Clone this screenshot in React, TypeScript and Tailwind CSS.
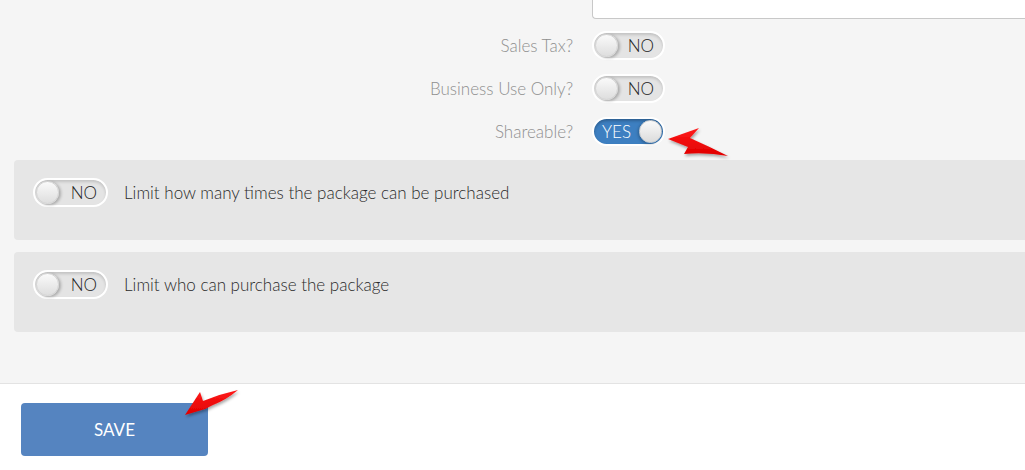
import React from 'react';

const Toggle: React.FC<{ on?: boolean; wide?: boolean }> = ({ on, wide }) => {
  if (on) {
    return (
      <div className="flex h-[29px] w-[73px] items-center justify-between rounded-full border-2 border-white bg-[#3d7fc1] pl-[8px] pr-[1px] shadow-[inset_0_2px_3px_rgba(0,0,0,0.25)]">
        <span className="text-[17px] font-light leading-none text-white">YES</span>
        <span className="h-[23px] w-[23px] rounded-full border border-[#cfcfcf] bg-gradient-to-b from-[#fafafa] to-[#dcdcdc] shadow-[-1px_1px_3px_rgba(0,0,0,0.25)]" />
      </div>
    );
  }
  return (
    <div
      className={`flex h-[29px] items-center justify-between rounded-full border-2 border-white bg-[#e4e4e4] pl-[1px] pr-[9px] shadow-[inset_0_2px_3px_rgba(0,0,0,0.15)] ${wide ? 'w-[75px]' : 'w-[73px]'}`}
    >
      <span className="h-[23px] w-[23px] rounded-full border border-[#d4d4d4] bg-gradient-to-b from-[#fafafa] to-[#dedede] shadow-[2px_1px_3px_rgba(0,0,0,0.25)]" />
      <span className="text-[17px] font-light leading-none text-[#222]">NO</span>
    </div>
  );
};

const Row: React.FC<{ label: string; on?: boolean }> = ({ label, on }) => (
  <div className="flex items-center">
    <div className="w-[573px] text-right text-[17px] font-light text-[#8f8f8f]">{label}</div>
    <div className="ml-[19px]">
      <Toggle on={on} />
    </div>
  </div>
);

const Panel: React.FC<{ text: string }> = ({ text }) => (
  <div className="ml-[14px] h-[80px] rounded-l-[4px] bg-[#e6e6e6] pl-[19px] pt-[18px]">
    <div className="flex items-center gap-[16px]">
      <Toggle wide />
      <span className="text-[17px] font-light text-[#2a2a2a]">{text}</span>
    </div>
  </div>
);

export default function App() {
  return (
    <div
      className="relative h-[470px] w-[1025px] overflow-hidden bg-white"
      style={{ fontFamily: 'Lato, "Liberation Sans", sans-serif' }}
    >
      <div className="h-[384px] border-b border-[#e3e3e3] bg-[#f5f5f5]">
        <div className="flex">
          <div className="ml-[592px] h-[19px] flex-1 rounded-bl-[4px] border-b border-l border-[#c8c8c8] bg-white" />
        </div>
        <div className="mt-[12px] flex flex-col gap-[14px]">
          <Row label="Sales Tax?" />
          <Row label="Business Use Only?" />
          <Row label="Shareable?" on />
        </div>
        <div className="mt-[14px] flex flex-col gap-[12px]">
          <Panel text="Limit how many times the package can be purchased" />
          <Panel text="Limit who can purchase the package" />
        </div>
      </div>
      <div className="pl-[21px] pt-[19px]">
        <button className="flex h-[53px] w-[187px] items-center justify-center rounded-[4px] bg-[#5584c0] text-[17px] text-white">
          SAVE
        </button>
      </div>

      {/* callout arrows */}
      <svg className="pointer-events-none absolute left-0 top-0" width="1025" height="470">
        <defs>
          <filter id="sh" x="-20%" y="-20%" width="140%" height="140%">
            <feDropShadow dx="1" dy="2" stdDeviation="1.5" floodColor="#000" floodOpacity="0.35" />
          </filter>
          <linearGradient id="rg" x1="0" y1="0" x2="0" y2="1">
            <stop offset="0" stopColor="#ff1a1a" />
            <stop offset="1" stopColor="#e00000" />
          </linearGradient>
        </defs>
        <path
          d="M668 139 L699 128 L690 138 Q708 146 728 156 Q706 152 684 154 L688 147 Z"
          fill="url(#rg)"
          filter="url(#sh)"
        />
        <path
          d="M185 415 L200 392 L203 401 Q220 394 238 390 Q226 400 213 405 L205 409 Z"
          fill="url(#rg)"
          filter="url(#sh)"
        />
      </svg>
    </div>
  );
}
